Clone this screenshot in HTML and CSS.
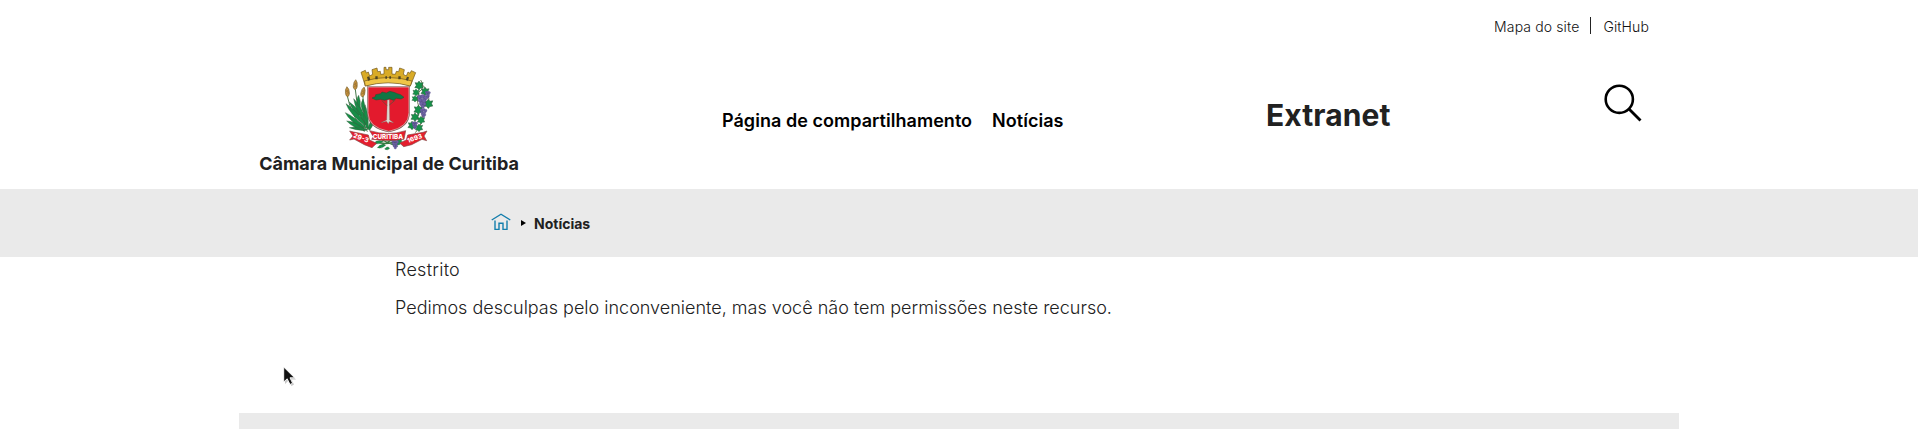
FILE: index.html
```
<!DOCTYPE html>
<html lang="pt-BR">
<head>
<meta charset="utf-8">
<title>Notícias</title>
<link rel="stylesheet" href="styles.css">
</head>
<body>
<header class="header">
  <div class="links"><a>Mapa do site</a><span class="rule"></span><a>GitHub</a></div>
  <div class="main-row">
    <a class="brand">
      <svg class="crest" viewBox="0 0 330 285">
        <defs>
          <g id="corn"><path d="M0-16Q7-10 6 5Q4 14 0 14Q-6 12-6 4Q-7-9 0-16Z" fill="#c3913f" stroke="#6b5524" stroke-width="1.5"/><path d="M-4 0L4-7M-5 7L5 0M-2-7L5 7" stroke="#8a642b" stroke-width="1.3"/></g>
          <path id="leaf" d="M0-11L4-6L11-7L8 0L11 6L4 7L0 12L-4 7L-11 6L-7 0L-10-7L-4-6Z" fill="#16924a" stroke="#315b3c" stroke-width="1.5"/>
          <g id="grapes" fill="#6d61a5" stroke="#494078" stroke-width="1"><circle cx="-7" cy="-8" r="5"/><circle cx="1" cy="-9" r="5"/><circle cx="8" cy="-6" r="5"/><circle cx="-5" r="5"/><circle cx="4" cy="1" r="5"/><circle cx="-2" cy="8" r="5"/><circle cx="5" cy="9" r="4"/><circle cx="1" cy="15" r="4"/></g>
        </defs>
        <path d="M37 108Q48 165 88 215M61 88Q66 155 97 215M84 108Q83 165 99 210" fill="none" stroke="#48784b" stroke-width="3"/>
        <g fill="#178d47" stroke="#365f3d" stroke-width="1.3">
          <path d="M89 212Q57 206 35 183Q60 184 87 205ZM88 205Q45 187 31 158Q54 168 91 200ZM88 196Q43 160 33 131Q63 150 94 193ZM91 191Q62 154 56 116Q80 139 97 187ZM72 166Q50 149 43 126Q64 140 80 166ZM94 204Q79 167 90 134Q101 159 100 204ZM90 212Q59 210 43 203Q70 197 97 208ZM99 206Q102 185 118 174Q118 194 104 211ZM82 151Q74 133 84 117Q92 133 88 158ZM68 137Q62 118 71 106Q78 123 76 144Z"/>
        </g>
        <use href="#corn" transform="translate(37 96) rotate(-5)"/><use href="#corn" transform="translate(61 75) rotate(4)"/><use href="#corn" transform="translate(84 97) rotate(12)"/>
        <path d="M257 60Q272 82 252 96Q239 129 261 155Q268 188 241 218M254 72Q278 78 282 119" fill="none" stroke="#59643a" stroke-width="2.5"/>
        <use href="#leaf" transform="translate(252 76) scale(1.15)"/><use href="#leaf" transform="translate(243 97) scale(.9)"/><use href="#leaf" transform="translate(270 94) scale(1.1)"/><use href="#leaf" transform="translate(240 116) scale(.85)"/><use href="#leaf" transform="translate(280 131) scale(1.2)"/><use href="#leaf" transform="translate(250 149) scale(1.2)"/><use href="#leaf" transform="translate(240 171) scale(1.1)"/><use href="#leaf" transform="translate(258 180)"/><use href="#leaf" transform="translate(231 196) scale(1.1)"/><use href="#leaf" transform="translate(252 203)"/>
        <use href="#grapes" transform="translate(262 121) scale(1.25)"/><use href="#grapes" transform="translate(265 157) scale(.85)"/><use href="#grapes" transform="translate(278 102) scale(.65)"/><use href="#grapes" transform="translate(239 194) scale(.7)"/>
        <g fill="#d9ab27" stroke="#70551d" stroke-width="2">
          <path d="M91 78L78 37L91 31L94 39L100 36L104 48L113 43L111 29L126 24L128 35L136 34L137 43L147 42V22H153V29H161V22H171V42L181 43L184 34L191 35L194 24L208 29L205 43L214 48L219 36L225 40L229 32L242 38L226 78Q160 54 91 78Z"/>
          <path d="M91 78L88 63Q160 42 231 63L226 78Q160 59 91 78Z" fill="#efc547"/>
        </g>
        <g fill="#4d4324"><path d="M96 51L103 49L106 60L99 62ZM121 49H128V58H121ZM151 49H156V56H151ZM163 49H168V56H163ZM190 49H197V58H190ZM216 50L222 52L219 62L212 60Z"/></g>
        <path d="M99 81H222V158Q222 202 161 214Q99 202 99 158Z" fill="#e31a2d" stroke="#76504c" stroke-width="5"/>
        <path d="M99 81H222V158Q222 202 161 214Q99 202 99 158Z" fill="#e31a2d" stroke="#ddd4cc" stroke-width="2"/>
        <path d="M157 119H163L164 180L176 188L163 185L160 191L154 184L138 188L155 180Z" fill="#ddd9d2" stroke="#75675f" stroke-width="1"/>
        <path d="M156 137L141 122M163 135L181 120" stroke="#4a5937" stroke-width="2"/>
        <path d="M111 114L121 110L122 104L137 101L141 96L154 99L164 94L177 97L187 101L197 104L207 112L198 117L184 115L175 121L163 116L149 121L136 118L123 120Z" fill="#117744" stroke="#254d31" stroke-width="1.5"/>
        <path d="M124 245Q149 257 195 243M134 260L173 238M187 260L141 240" fill="none" stroke="#397b42" stroke-width="4"/>
        <path d="M127 263Q137 249 152 256Q140 268 127 263ZM187 256Q179 238 198 236Q206 251 187 256ZM115 251Q128 236 145 244Q134 254 115 251ZM149 267Q157 256 164 265Q157 273 149 267Z" fill="#16924a" stroke="#365f3d"/>
        <use href="#grapes" transform="translate(180 251) scale(.85)"/>
        <g fill="#e51e2d" stroke="#834c4a" stroke-width="2">
          <path d="M44 213L56 216L100 225L104 240L125 250L111 263L88 254L57 237L44 240L54 228Z"/>
          <path d="M276 213L264 217L218 225L214 240L194 249L206 260L230 254L261 238L275 242L267 228Z"/>
          <path d="M104 212Q160 229 212 212L207 238Q160 245 110 238L115 230Z"/>
        </g>
        <g class="crest-text" fill="#fff" text-anchor="middle"><text x="159" y="236" font-size="20" textLength="91" lengthAdjust="spacingAndGlyphs">CURITIBA</text><text transform="translate(76 240) rotate(20)" font-size="20">29-3</text><text transform="translate(241 241) rotate(-20)" font-size="19">1693</text></g>
      </svg>
      <span class="brand-name">Câmara Municipal de Curitiba</span>
    </a>
    <nav class="nav"><a>Página de compartilhamento</a><a>Notícias</a></nav>
    <div class="site-title">Extranet</div>
    <svg class="search" viewBox="0 0 40 40" fill="none" stroke="#000"><circle cx="16.3" cy="16.3" r="13.6" stroke-width="2.6"/><path d="M26 26L37.5 37.5" stroke-width="2.8"/></svg>
  </div>
</header>
<div class="crumbs">
  <svg class="home" viewBox="0 0 20 18" fill="none" stroke="#147eac" stroke-width="1.4"><path d="M.7 7L10 1.2L19.3 7M4 7.5V16.4H8V10.3H12V16.4H16V7.5"/></svg>
  <svg class="arrow" viewBox="0 0 5 6"><path d="M0 0L5 3L0 6Z"/></svg>
  <span>Notícias</span>
</div>
<main class="content"><p class="status">Restrito</p><p>Pedimos desculpas pelo inconveniente, mas você não tem permissões neste recurso.</p></main>
<footer class="footer"></footer>
<svg class="cursor" viewBox="0 0 14 21"><path d="M2 3V18L5.5 14.5L8.5 20L11 18.5L8.5 13.5H13Z" fill="#999" opacity=".55"/><path d="M.7 1V16L4.2 12.8L7 18.5L9.6 17.2L7 11.8H11.6Z" fill="#111" stroke="#fff" stroke-width=".9"/></svg>
</body>
</html>
```
FILE: styles.css
```
* { box-sizing: border-box; }
body { margin: 0; height: 429px; overflow: hidden; background: #fff; color: #212121; font-family: Inter, sans-serif; font-size: 18px; font-weight: 300; display: flex; flex-direction: column; }
.header { width: 1440px; height: 189px; margin: 0 auto; flex: none; }
.links { height: 60px; padding: 17px 30px 0 0; display: flex; justify-content: flex-end; font-size: 14px; line-height: 20px; letter-spacing: .12px; color: #111; }
.rule { width: 1px; height: 17px; background: #222; margin: 0 12px 0 11px; }
.main-row { height: 129px; display: grid; grid-template-columns: 483px 544px 337px 40px; align-items: start; }
.brand { width: 260px; margin-left: 20px; display: flex; flex-direction: column; align-items: center; }
.crest { width: 110px; height: 95px; margin: 0 0 -3px 2px; }
.crest-text { font-family: Inter, sans-serif; font-weight: 800; }
.brand-name { font-weight: 700; line-height: 24px; white-space: nowrap; }
.nav { display: flex; gap: 20px; padding-top: 49px; line-height: 24px; font-weight: 600; letter-spacing: .04px; color: #000; white-space: nowrap; }
.site-title { font-size: 30px; font-weight: 700; line-height: 36px; padding-top: 37px; letter-spacing: .1px; }
.search { width: 40px; height: 40px; margin-top: 23px; }
.crumbs { height: 68px; flex: none; background: #eaeaea; padding: 0 0 0 491px; display: flex; align-items: center; font-size: 14px; font-weight: 700; }
.home { width: 20px; height: 18px; margin-top: -2px; }
.arrow { width: 5px; height: 6px; margin: 0 8px 0 10px; }
.content { height: 156px; flex: none; padding: 0 0 0 395px; }
.content p { margin: 0 0 12px; line-height: 26px; }
.content .status { letter-spacing: .25px; }
.footer { width: 1440px; height: 16px; margin: 0 auto; background: #eaeaea; flex: none; }
.cursor { position: absolute; left: 283px; top: 366px; width: 14px; height: 21px; }
```
